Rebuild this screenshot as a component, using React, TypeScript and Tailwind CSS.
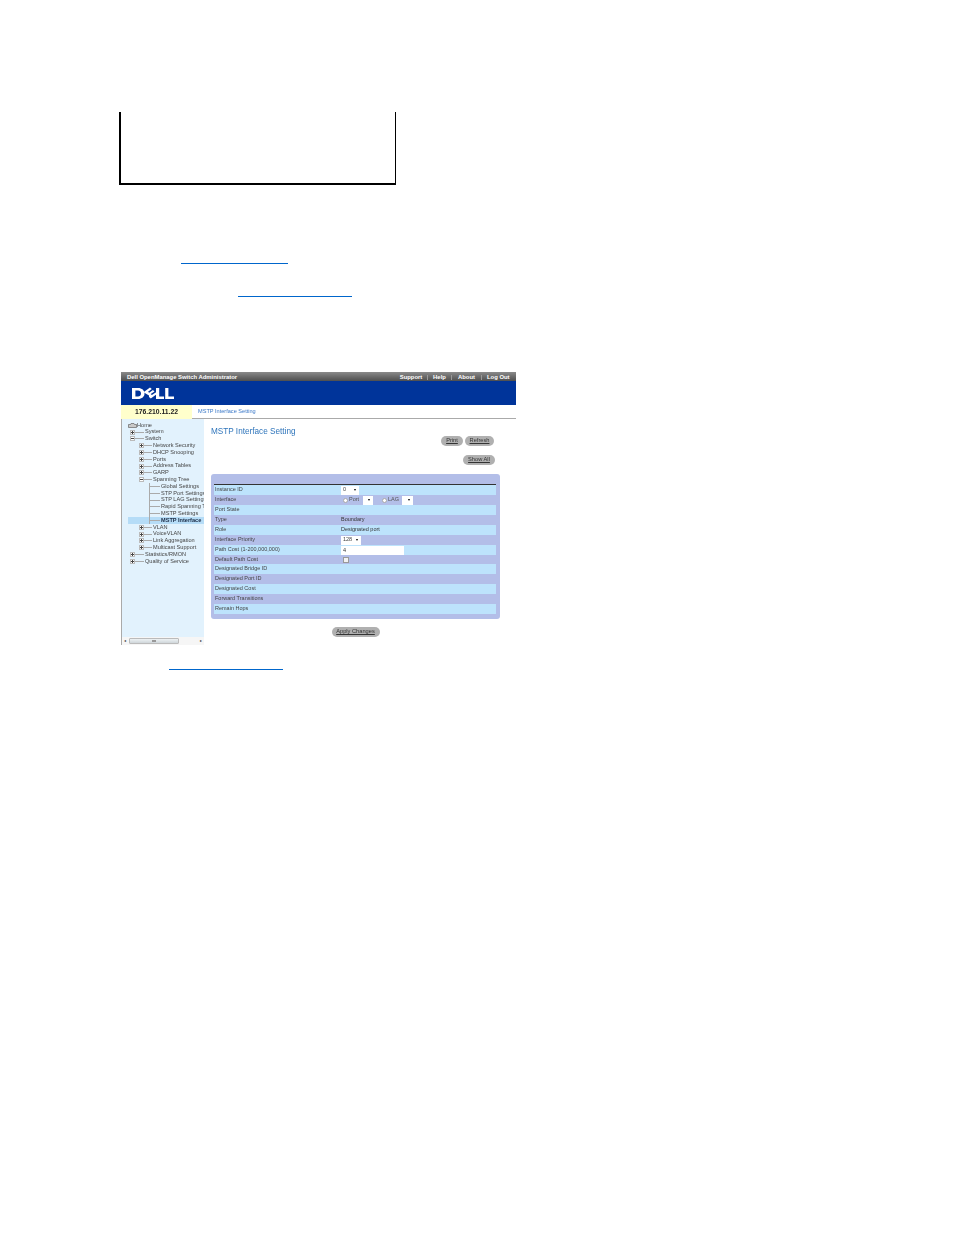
import React from "react";

function Sel({ text, w }: { text: string; w: string }) {
  return (
    <span className={`inline-flex h-[9px] items-center justify-between bg-white pl-[2px] pr-[3px] ${w}`}>
      <span className="text-[5.5px] leading-none text-[#444]">{text}</span>
      <span className="h-0 w-0 border-x-[1.5px] border-t-[2px] border-x-transparent border-t-black" />
    </span>
  );
}

function Radio({ className }: { className?: string }) {
  return <span className={`inline-block h-[5px] w-[5px] rounded-full border border-[#aaa] bg-white ${className ?? ""}`} />;
}

const tableRows: { label: string; h: string; value?: React.ReactNode }[] = [
  { label: "Instance ID", h: "h-[10px]", value: <Sel text="0" w="w-[18px]" /> },
  {
    label: "Interface",
    h: "h-[10px]",
    value: (
      <span className="flex items-center text-[5.5px] text-[#555]">
        <Radio className="ml-[2px]" />
        <span className="ml-[1px] w-[14px]">Port</span>
        <Sel text="" w="w-[10px]" />
        <Radio className="ml-[9px]" />
        <span className="ml-[1px] w-[14px]">LAG</span>
        <Sel text="" w="w-[11px]" />
      </span>
    ),
  },
  { label: "Port State", h: "h-[10px]" },
  { label: "Type", h: "h-[10px]", value: <span className="text-[#333]">Boundary</span> },
  { label: "Role", h: "h-[10px]", value: <span className="text-[#333]">Designated port</span> },
  { label: "Interface Priority", h: "h-[10px]", value: <Sel text="128" w="w-[20px]" /> },
  {
    label: "Path Cost (1-200,000,000)",
    h: "h-[10px]",
    value: <span className="block h-[9px] w-[63px] bg-white pl-[2px] text-[5.5px] leading-[9px] text-[#333]">4</span>,
  },
  {
    label: "Default Path Cost",
    h: "h-[9px]",
    value: <span className="ml-[2px] block h-[6px] w-[6px] border border-[#999] bg-[#f2f2f2]" />,
  },
  { label: "Designated Bridge ID", h: "h-[10px]" },
  { label: "Designated Port ID", h: "h-[10px]" },
  { label: "Designated Cost", h: "h-[10px]" },
  { label: "Forward Transitions", h: "h-[10px]" },
  { label: "Remain Hops", h: "h-[10px]" },
];

type Node = { label: string; depth: 1 | 2 | 3; box?: "plus" | "minus"; active?: boolean };

const tree: Node[] = [
  { label: "System", depth: 1, box: "plus" },
  { label: "Switch", depth: 1, box: "minus" },
  { label: "Network Security", depth: 2, box: "plus" },
  { label: "DHCP Snooping", depth: 2, box: "plus" },
  { label: "Ports", depth: 2, box: "plus" },
  { label: "Address Tables", depth: 2, box: "plus" },
  { label: "GARP", depth: 2, box: "plus" },
  { label: "Spanning Tree", depth: 2, box: "minus" },
  { label: "Global Settings", depth: 3 },
  { label: "STP Port Settings", depth: 3 },
  { label: "STP LAG Settings", depth: 3 },
  { label: "Rapid Spanning Tree", depth: 3 },
  { label: "MSTP Settings", depth: 3 },
  { label: "MSTP Interface", depth: 3, active: true },
  { label: "VLAN", depth: 2, box: "plus" },
  { label: "VoiceVLAN", depth: 2, box: "plus" },
  { label: "Link Aggregation", depth: 2, box: "plus" },
  { label: "Multicast Support", depth: 2, box: "plus" },
  { label: "Statistics/RMON", depth: 1, box: "plus" },
  { label: "Quality of Service", depth: 1, box: "plus" },
];

function TreeRow({ node }: { node: Node }) {
  const text = node.active ? "font-bold text-[#1a2a44]" : "text-[#444]";
  return (
    <div className={`flex h-[6.8px] items-center whitespace-nowrap text-[5.6px] leading-none ${node.active ? "ml-[6px] bg-[#b5dcf7]" : ""} ${text}`}>
      {node.depth === 3 ? (
        <>
          <span className={`${node.active ? "ml-[21px]" : "ml-[27px]"} flex h-full w-[11px] shrink-0 items-center border-l border-[#aaa]`}>
            <span className="h-px w-full bg-[#aaa]" />
          </span>
          <span className="ml-[1px]">{node.label}</span>
        </>
      ) : (
        <>
          <span className={`${node.depth === 1 ? "ml-[8px]" : "ml-[17px]"} relative flex h-[5px] w-[5px] shrink-0 items-center justify-center border border-[#bbb] bg-white`}>
            <span className="h-px w-[3px] bg-[#444]" />
            {node.box === "plus" && <span className="absolute h-[3px] w-px bg-[#444]" />}
          </span>
          <span className={`h-px shrink-0 bg-[#aaa] ${node.depth === 1 ? "w-[9px]" : "w-[8px]"}`} />
          <span className="ml-[1px]">{node.label}</span>
        </>
      )}
    </div>
  );
}

function Btn({ w, label }: { w: string; label: string }) {
  return (
    <span className={`flex h-[10px] items-center justify-center rounded-full bg-[#b0b0b0] text-[5.7px] leading-none text-[#333] underline ${w}`}>
      {label}
    </span>
  );
}

export default function App() {
  return (
    <div className="h-[1235px] w-[954px] overflow-hidden bg-white pt-[112px] font-['Liberation_Sans',Arial,sans-serif]">
      <div className="ml-[119px] h-[73px] w-[277px] border-b-2 border-l-2 border-r border-black" />
      <div className="ml-[181px] mt-[78px] h-px w-[107px] bg-[#0066cc]" />
      <div className="ml-[238px] mt-[32px] h-px w-[114px] bg-[#0066cc]" />

      {/* Screenshot */}
      <div className="ml-[121px] mt-[75px] h-[273px] w-[395px] overflow-hidden blur-[0.3px]">
        <div className="flex h-[9px] items-center justify-between bg-gradient-to-b from-[#8a8a8a] to-[#4f4f4f] pl-[6px] pt-[2px] text-[5.9px] font-bold leading-none text-white">
          <span>Dell OpenManage Switch Administrator</span>
          <div className="flex items-center pr-[5px]">
            <span className="w-[33px] border-r border-[#999] text-center">Support</span>
            <span className="w-[24px] border-r border-[#999] text-center">Help</span>
            <span className="w-[30px] border-r border-[#999] text-center">About</span>
            <span className="w-[29px] pl-[5px]">Log Out</span>
          </div>
        </div>
        <div className="flex h-[24px] items-center bg-[#00349a] pl-[11px]">
          <svg width="42" height="13" viewBox="0 0 42 13">
            <path fillRule="evenodd" d="M0 1h6c4 0 6.500 2.400 6.500 5.500S10 12 6 12H0zM3.400 3.500v6H6c1.800 0 3-1.200 3-3s-1.200-3-3-3z" fill="#fff" />
            <path d="M11.500 5.200L18 0.500l1.800 1.500-3.800 2.700 1.200 1 3.800-2.700 1.500 1.400-3.800 2.700 1.200 1 3.800-2.700 1.600 1.400-6.500 4.800-1.800-1.500 0-1.700z" fill="#fff" />
            <path d="M24 1h3.200v8.500H32V12h-8zM33.200 1h3.200v8.500H42V12h-8.800z" fill="#fff" />
          </svg>
        </div>
        <div className="flex h-[14px] items-stretch bg-white">
          <div className="flex w-[71px] items-center justify-center bg-[#ffffcc] text-[6.8px] font-bold text-[#222]">176.210.11.22</div>
          <div className="flex flex-1 items-center border-b border-[#aaa] pl-[6px] text-[5.6px] text-[#3a78c8]">MSTP Interface Setting</div>
        </div>

        <div className="flex h-[226px]">
          {/* Tree */}
          <div className="relative flex w-[83px] flex-col overflow-hidden border-l border-[#aaa] bg-[#e2f2fd] pt-[3px]">
            <div className="flex h-[6.8px] items-center text-[5.6px] leading-none text-[#444]">
              <svg className="ml-[6px]" width="9" height="5" viewBox="0 0 9 5">
                <path d="M0.500 1.500h2l.5-1h3l.5 1h2v3h-8z" fill="#c9c9c9" stroke="#666" strokeWidth="0.700" />
              </svg>
              <span>Home</span>
            </div>
            {tree.map((node) => (
              <TreeRow key={node.label} node={node} />
            ))}
            {/* Horizontal scrollbar */}
            <div className="absolute bottom-0 left-0 flex h-[8px] w-full items-center bg-[#f6f6f6] px-[2px] text-[4px] text-[#333]">
              <span>◂</span>
              <span className="ml-[3px] flex h-[6px] w-[50px] items-center justify-center rounded-[1px] border border-[#bbb] bg-gradient-to-b from-[#eef2f4] to-[#cfd6da]">
                <span className="h-[2px] w-[4px] bg-[#999]" />
              </span>
              <span className="ml-auto">▸</span>
            </div>
          </div>

          {/* Content */}
          <div className="flex-1 bg-white pl-[7px] pr-[16px]">
            <div className="flex h-[36px] justify-between pt-[9px]">
              <h1 className="text-[8.2px] font-normal leading-none text-[#2f75bb]">MSTP Interface Setting</h1>
              <div className="flex gap-[2px] pr-[6px] pt-[8px]">
                <Btn w="w-[22px]" label="Print" />
                <Btn w="w-[29px]" label="Refresh" />
              </div>
            </div>
            <div className="flex h-[19px] justify-end pr-[5px]">
              <Btn w="w-[32px]" label="Show All" />
            </div>
            <div className="h-[145px] rounded-[3px] bg-[#b3bee8] pl-[3px] pr-[4px] pt-[10px]">
              <div className="border-t border-[#333]">
                {tableRows.map((row, i) => (
                  <div key={row.label} className={`flex items-center text-[5.5px] leading-none text-[#444] ${row.h} ${i % 2 === 0 ? "bg-[#bde3fc]" : "bg-[#b3bee8]"}`}>
                    <span className="w-[127px] pl-[1px]">{row.label}</span>
                    {row.value}
                  </div>
                ))}
              </div>
            </div>
            <div className="flex justify-center pt-[8px]">
              <Btn w="w-[48px]" label="Apply Changes" />
            </div>
          </div>
        </div>
      </div>

      <div className="ml-[169px] mt-[24px] h-px w-[114px] bg-[#0066cc]" />
    </div>
  );
}
